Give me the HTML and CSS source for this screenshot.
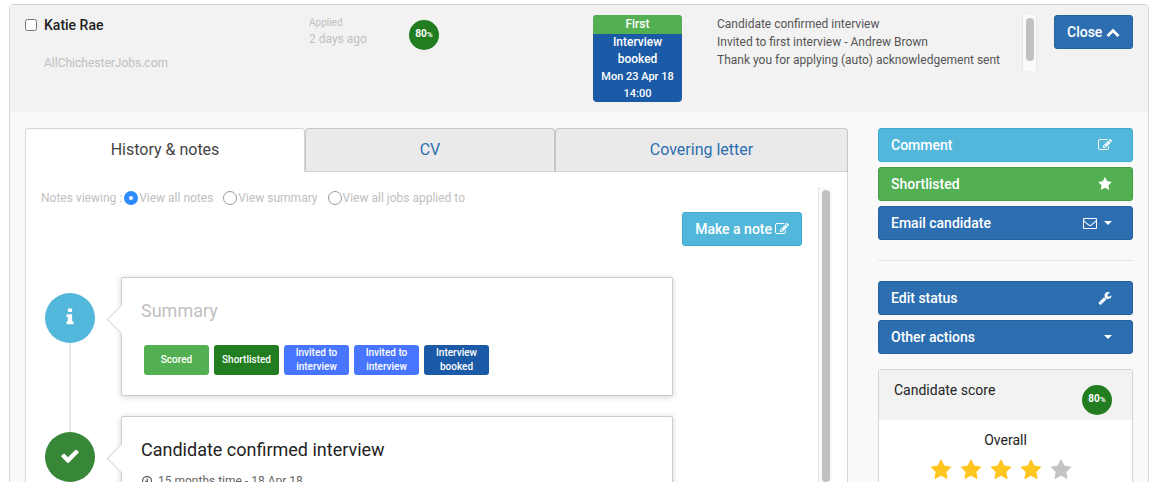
FILE: index.html
```html
<!DOCTYPE html>
<html lang="en">
  <head>
    <meta charset="UTF-8" />
    <meta name="viewport" content="width=device-width, initial-scale=1.0" />
    <title>Candidate - Katie Rae</title>
    <link rel="stylesheet" href="styles.css">
  </head>
  <body>
    <!-- Icon set -->
    <svg class="icon-set" aria-hidden="true">
      <symbol id="icon-edit" viewBox="0 0 1792 1792"><path d="M888 1184l116-116-152-152-116 116v56h96v96h56zm440-720q-16-16-33 1l-350 350q-17 17-1 33t33-1l350-350q17-17 1-33zm80 594v190q0 119-84.5 203.5t-203.5 84.5h-832q-119 0-203.5-84.5t-84.5-203.5v-832q0-119 84.5-203.5t203.5-84.5h832q63 0 117 25 15 7 18 23 3 17-9 29l-49 49q-14 14-32 8-23-6-45-6h-832q-66 0-113 47t-47 113v832q0 66 47 113t113 47h832q66 0 113-47t47-113v-126q0-13 9-22l64-64q15-15 35-7t20 29zm-96-738l288 288-672 672h-288v-288zm444 132l-92 92-288-288 92-92q28-28 68-28t68 28l152 152q28 28 28 68t-28 68z"/></symbol>
      <symbol id="icon-star" viewBox="0 0 1792 1792"><path d="M1728 647q0 22-26 48l-363 354 86 500q1 7 1 20 0 21-10.5 35.5t-30.5 14.5q-19 0-40-12l-449-236-449 236q-22 12-40 12-21 0-31.5-14.5t-10.5-35.5q0-6 2-20l86-500-364-354q-25-27-25-48 0-37 56-46l502-73 225-455q19-41 49-41t49 41l225 455 502 73q56 9 56 46z"/></symbol>
      <symbol id="icon-wrench" viewBox="0 0 1792 1792"><path d="M448 1472q0-26-19-45t-45-19-45 19-19 45 19 45 45 19 45-19 19-45zm644-420l-682 682q-37 37-90 37-52 0-91-37l-106-108q-38-36-38-90 0-53 38-91l681-681q39 98 114.5 173.5t173.5 114.5zm634-435q0 39-23 106-47 134-164.5 217.5t-258.5 83.5q-185 0-316.5-131.5t-131.5-316.5 131.5-316.5 316.5-131.5q58 0 121.5 16.5t107.5 46.5q16 11 16 28t-16 28l-293 169v224l193 107q5-3 79-48.5t135.5-81 70.5-35.5q15 0 23.5 10t8.5 25z"/></symbol>
      <symbol id="icon-envelope" viewBox="0 0 1792 1792"><path d="M1664 1504v-768q-32 36-69 66-268 206-426 338-51 43-83 67t-86.5 48.5-102.5 24.5h-2q-48 0-102.5-24.5t-86.5-48.5-83-67q-158-132-426-338-37-30-69-66v768q0 13 9.5 22.5t22.5 9.5h1472q13 0 22.5-9.5t9.5-22.5zm0-1051v-24.5l-.5-13-3-12.5-5.5-9-9-7.5-14-2.5h-1472q-13 0-22.5 9.5t-9.5 22.5q0 168 147 284 193 152 401 317 6 5 35 29.5t46 37.5 44.5 31.5 50.5 27.5 43 9h2q20 0 43-9t50.5-27.5 44.5-31.5 46-37.5 35-29.5q208-165 401-317 54-43 100.5-115.5t46.5-131.5zm128-37v1088q0 66-47 113t-113 47h-1472q-66 0-113-47t-47-113v-1088q0-66 47-113t113-47h1472q66 0 113 47t47 113z"/></symbol>
      <symbol id="icon-info" viewBox="0 0 1792 1792"><path d="M1216 1344v128q0 26-19 45t-45 19h-512q-26 0-45-19t-19-45v-128q0-26 19-45t45-19h64v-384h-64q-26 0-45-19t-19-45v-128q0-26 19-45t45-19h384q26 0 45 19t19 45v576h64q26 0 45 19t19 45zm-128-1152v192q0 26-19 45t-45 19h-256q-26 0-45-19t-19-45v-192q0-26 19-45t45-19h256q26 0 45 19t19 45z"/></symbol>
      <symbol id="icon-check" viewBox="0 0 1792 1792"><path d="M1671 566q0 40-28 68l-724 724-136 136q-28 28-68 28t-68-28l-136-136-362-362q-28-28-28-68t28-68l136-136q28-28 68-28t68 28l294 295 656-657q28-28 68-28t68 28l136 136q28 28 28 68z"/></symbol>
      <symbol id="icon-up" viewBox="0 0 1792 1792"><path d="M1683 1331l-166 165q-19 19-45 19t-45-19l-531-531-531 531q-19 19-45 19t-45-19l-166-165q-19-19-19-45.5t19-45.5l742-741q19-19 45-19t45 19l742 741q19 19 19 45.5t-19 45.5z"/></symbol>
      <symbol id="icon-clock" viewBox="0 0 16 16"><path fill="none" stroke="currentColor" stroke-width="1.700" d="M8 2a6 6 0 1 0 0 12A6 6 0 1 0 8 2zM8.500 4.500v4h-3"/></symbol>
    </svg>

    <div class="candidate">
      <div class="candidate-header">
        <div class="candidate-name">
          <input type="checkbox" id="select_candidate" />
          <label for="select_candidate">Katie Rae</label>
          <div class="source">AllChichesterJobs.com</div>
        </div>
        <div class="applied">
          <div class="applied-label">Applied</div>
          <div class="applied-date">2 days ago</div>
        </div>
        <div>
          <div class="score-badge"><span>80<small>%</small></span></div>
        </div>
        <div class="status-box">
          <div class="stage">First</div>
          <div class="status">Interview<br>booked</div>
          <div class="status-date">Mon 23 Apr 18<br>14:00</div>
        </div>
        <div class="log">
          <div class="log-lines">
            <div>Candidate confirmed interview</div>
            <div>Invited to first interview - Andrew Brown</div>
            <div>Thank you for applying (auto) acknowledgement sent</div>
          </div>
          <div class="scrollbar"><div class="thumb"></div></div>
        </div>
        <button class="btn btn-primary btn-close">Close <svg class="icon"><use href="#icon-up"/></svg></button>
      </div>

      <div class="candidate-body">
        <div class="main">
          <div class="tabs">
            <a class="tab active" href="#history">History &amp; notes</a>
            <a class="tab" href="#cv">CV</a>
            <a class="tab" href="#letter">Covering letter</a>
          </div>

          <div class="tab-content" id="history">
            <div class="notes">
              <form class="notes-filter">
                <span>Notes viewing :</span>
                <input type="radio" name="view" id="view_all" checked />
                <label for="view_all">View all notes</label>
                <input type="radio" name="view" id="view_summary" />
                <label for="view_summary">View summary</label>
                <input type="radio" name="view" id="view_jobs" />
                <label for="view_jobs">View all jobs applied to</label>
              </form>
              <div class="notes-actions">
                <button class="btn btn-info">Make a note <svg class="icon"><use href="#icon-edit"/></svg></button>
              </div>

              <div class="timeline">
                <div class="event">
                  <div class="event-icon info"><svg class="icon"><use href="#icon-info"/></svg></div>
                  <div class="event-card">
                    <h3 class="muted">Summary</h3>
                    <div class="steps">
                      <span class="step scored">Scored</span>
                      <span class="step shortlisted">Shortlisted</span>
                      <span class="step invited">Invited to interview</span>
                      <span class="step invited">Invited to interview</span>
                      <span class="step booked">Interview booked</span>
                    </div>
                  </div>
                </div>
                <div class="event">
                  <div class="event-icon done"><svg class="icon"><use href="#icon-check"/></svg></div>
                  <div class="event-card">
                    <h3>Candidate confirmed interview</h3>
                    <p class="event-time"><svg class="icon"><use href="#icon-clock"/></svg> 15 months time - 18 Apr 18</p>
                  </div>
                </div>
              </div>
            </div>
            <div class="scrollbar"><div class="thumb"></div></div>
          </div>
        </div>

        <div class="sidebar">
          <button class="btn btn-info">Comment <svg class="icon"><use href="#icon-edit"/></svg></button>
          <button class="btn btn-success">Shortlisted <svg class="icon"><use href="#icon-star"/></svg></button>
          <button class="btn btn-primary">Email candidate <span class="btn-icons"><svg class="icon"><use href="#icon-envelope"/></svg><span class="caret"></span></span></button>
          <hr>
          <button class="btn btn-primary">Edit status <svg class="icon"><use href="#icon-wrench"/></svg></button>
          <button class="btn btn-primary">Other actions <span class="caret"></span></button>

          <div class="score-panel">
            <div class="score-header">
              <span>Candidate score</span>
              <div class="score-badge"><span>80<small>%</small></span></div>
            </div>
            <div class="score-body">
              <div>Overall</div>
              <div class="stars">
                <svg class="icon"><use href="#icon-star"/></svg>
                <svg class="icon"><use href="#icon-star"/></svg>
                <svg class="icon"><use href="#icon-star"/></svg>
                <svg class="icon"><use href="#icon-star"/></svg>
                <svg class="icon empty"><use href="#icon-star"/></svg>
              </div>
            </div>
          </div>
        </div>
      </div>
    </div>
  </body>
</html>
```

FILE: styles.css
```css
* {
  box-sizing: border-box;
}

html {
  scrollbar-width: none;
}

body {
  margin: 0;
  padding: 4px 11px 0 9px;
  font-family: Roboto, "Liberation Sans", sans-serif;
  font-size: 14px;
  line-height: 20px;
  color: #222;
  background-color: #fff;
}

.icon-set {
  display: none;
}

.icon {
  width: 14px;
  height: 14px;
  fill: currentColor;
  flex: none;
}

.candidate {
  border: 1px solid #d5d5d5;
  border-radius: 4px;
  background-color: #f9f9f9;
}

/* Header */
.candidate-header {
  display: grid;
  grid-template-columns: 1fr 100px 184px 124px 337px 79px;
  align-items: start;
  min-height: 107px;
  padding: 10px 15px;
  background-color: #f2f2f2;
}

.candidate-name {
  display: grid;
  grid-template-columns: 12px 1fr;
  column-gap: 7px;
  align-items: center;
}

.candidate-name label {
  font-weight: 500;
}

.candidate-name input {
  width: 12px;
  height: 12px;
  margin: 0;
}

.source {
  grid-column: 2;
  margin-top: 18px;
  font-size: 12px;
  color: #c0c0c0;
}

.applied {
  color: #c0c0c0;
  font-size: 12px;
  line-height: 16px;
}

.applied-label {
  font-size: 10px;
}

.score-badge {
  display: flex;
  justify-content: center;
  align-items: center;
  width: 30px;
  height: 30px;
  margin-top: 5px;
  padding-bottom: 2px;
  border-radius: 50%;
  background-color: #217d1f;
  color: #fff;
  font-size: 10px;
  font-weight: 700;
}

.score-badge small {
  font-size: 8px;
}

.status-box {
  width: 89px;
  border-radius: 4px;
  overflow: hidden;
  background-color: #1b5aa6;
  color: #fff;
  text-align: center;
  font-size: 12px;
  font-weight: 500;
  line-height: 17px;
}

.stage {
  line-height: 19px;
  background-color: #53b052;
}

.status-date {
  font-size: 11px;
}

.log {
  display: flex;
  width: 320px;
  height: 56px;
  font-size: 12px;
  line-height: 18px;
  color: #555;
}

.log-lines {
  flex: 1;
  white-space: nowrap;
}

.scrollbar {
  flex: none;
  width: 14px;
  padding: 3px 3px 0;
  border-left: 1px solid #e6e6e6;
  background-color: #fafafa;
}

.thumb {
  width: 8px;
  height: 292px;
  border-radius: 4px;
  background-color: #c1c1c1;
}

.log .scrollbar {
  width: 15px;
  border-right: 1px solid #e6e6e6;
}

.log .thumb {
  height: 43px;
}

/* Buttons */
.btn {
  display: flex;
  align-items: center;
  gap: 4px;
  height: 34px;
  padding: 0 12px;
  border: 1px solid;
  border-radius: 3px;
  color: #fff;
  font-family: inherit;
  font-size: 14px;
  font-weight: 500;
  cursor: pointer;
}

.btn-primary {
  background-color: #2c6eaf;
  border-color: #25619d;
}

.btn-info {
  background-color: #52b7da;
  border-color: #3cabd2;
}

.btn-success {
  background-color: #53b052;
  border-color: #429f41;
}

.caret {
  border-top: 4px solid;
  border-left: 4px solid transparent;
  border-right: 4px solid transparent;
}

/* Body */
.candidate-body {
  display: grid;
  grid-template-columns: 1fr 255px;
  column-gap: 30px;
  padding: 16px 15px;
}

.main {
  display: flex;
  flex-direction: column;
}

.tabs {
  display: grid;
  grid-template-columns: 280fr 250fr 293fr;
}

.tab {
  height: 44px;
  border: 1px solid #c6c6c6;
  border-bottom-color: #d5d5d5;
  border-radius: 4px 4px 0 0;
  background-color: #eaeaea;
  color: #2c6eaf;
  font-size: 16px;
  line-height: 42px;
  text-align: center;
  text-decoration: none;
}

.tab.active {
  border-color: #d5d5d5;
  border-bottom-color: #fff;
  background-color: #fff;
  color: #444;
}

.tab-content {
  flex: 1;
  display: flex;
  padding: 15px;
  border: 1px solid #d5d5d5;
  border-top: 0;
  background-color: #fff;
}

.notes {
  flex: 1;
}

.notes-filter {
  display: flex;
  align-items: center;
  height: 22px;
  color: #c0c0c0;
  font-size: 12px;
}

.notes-filter input {
  appearance: none;
  width: 14px;
  height: 14px;
  margin: 0 1px 0 2px;
  border: 1px solid #999;
  border-radius: 50%;
  background-color: #fff;
}

.notes-filter input:checked {
  border: 5px solid #2f8bfc;
}

.notes-filter label {
  margin-right: 8px;
}

.notes-actions {
  display: flex;
  justify-content: flex-end;
  padding: 3px 16px 31px 0;
}

.notes-actions .btn {
  gap: 3px;
}

/* Timeline */
.timeline {
  padding-left: 4px;
}

.event {
  display: flex;
  position: relative;
  padding-bottom: 20px;
}

/* line joining an event to the next one */
.event::before {
  content: "";
  position: absolute;
  left: 24px;
  top: 16px;
  width: 2px;
  height: 100%;
  background-color: #e6e6e6;
}

.event:last-child::before {
  display: none;
}

.event-icon {
  display: flex;
  flex: none;
  justify-content: center;
  align-items: center;
  position: relative;
  z-index: 1;
  width: 50px;
  height: 50px;
  margin: 16px 26px 0 0;
  padding-bottom: 2px;
  border-radius: 50%;
  color: #fff;
}

.event-icon .icon {
  width: 20px;
  height: 20px;
}

.info {
  background-color: #52b7da;
}

.done {
  background-color: #388637;
}

.event-card {
  flex: 0 1 552px;
  position: relative;
  min-height: 119px;
  padding: 19px;
  border: 1px solid #ccc;
  border-radius: 2px;
  background-color: #fff;
  box-shadow: 0 1px 6px rgba(0, 0, 0, 0.18);
}

/* pointer towards the icon */
.event-card::before {
  content: "";
  position: absolute;
  left: -11px;
  top: 31px;
  width: 20px;
  height: 20px;
  border: 1px solid #d5d5d5;
  border-top: 0;
  border-right: 0;
  background-color: #fff;
  transform: rotate(45deg);
}

.event-card h3 {
  position: relative;
  margin: 0;
  font-size: 18px;
  font-weight: 400;
  line-height: 28px;
}

.event-card h3.muted {
  color: #c0c0c0;
}

.event-time {
  display: flex;
  align-items: center;
  gap: 5px;
  margin: 7px 0 0;
  color: #666;
  font-size: 12px;
}

.event-time .icon {
  width: 12px;
  height: 12px;
}

.steps {
  display: flex;
  gap: 5px;
  margin: 20px 3px 0;
}

.step {
  display: flex;
  justify-content: center;
  align-items: center;
  width: 65px;
  height: 30px;
  padding: 0 8px;
  border-radius: 3px;
  color: #fff;
  font-size: 10px;
  font-weight: 500;
  line-height: 14px;
  text-align: center;
}

.scored {
  background-color: #53b052;
}

.shortlisted {
  background-color: #217d1f;
}

.invited {
  background-color: #4775ff;
}

.booked {
  background-color: #1b5aa6;
}

/* Sidebar */
.sidebar {
  display: flex;
  flex-direction: column;
  gap: 5px;
}

.sidebar .btn {
  justify-content: space-between;
  padding-right: 20px;
}

.btn-icons {
  display: flex;
  align-items: center;
  gap: 7px;
}

.sidebar hr {
  width: 100%;
  margin: 15px 0;
  border: 0;
  border-top: 1px solid #e6e6e6;
}

.score-panel {
  margin-top: 10px;
  border: 1px solid #d5d5d5;
  border-radius: 3px;
  background-color: #fff;
}

.score-header {
  display: flex;
  justify-content: space-between;
  align-items: flex-start;
  height: 50px;
  padding: 10px 20px 0 15px;
  background-color: #f2f2f2;
}

.score-body {
  padding: 10px 15px 16px;
  text-align: center;
}

.stars {
  display: flex;
  justify-content: center;
  gap: 8px;
  padding: 9px 10px 0 0;
  color: #ffc520;
}

.stars .icon {
  width: 22px;
  height: 22px;
}

.stars .empty {
  color: #c4c4c4;
}
```
